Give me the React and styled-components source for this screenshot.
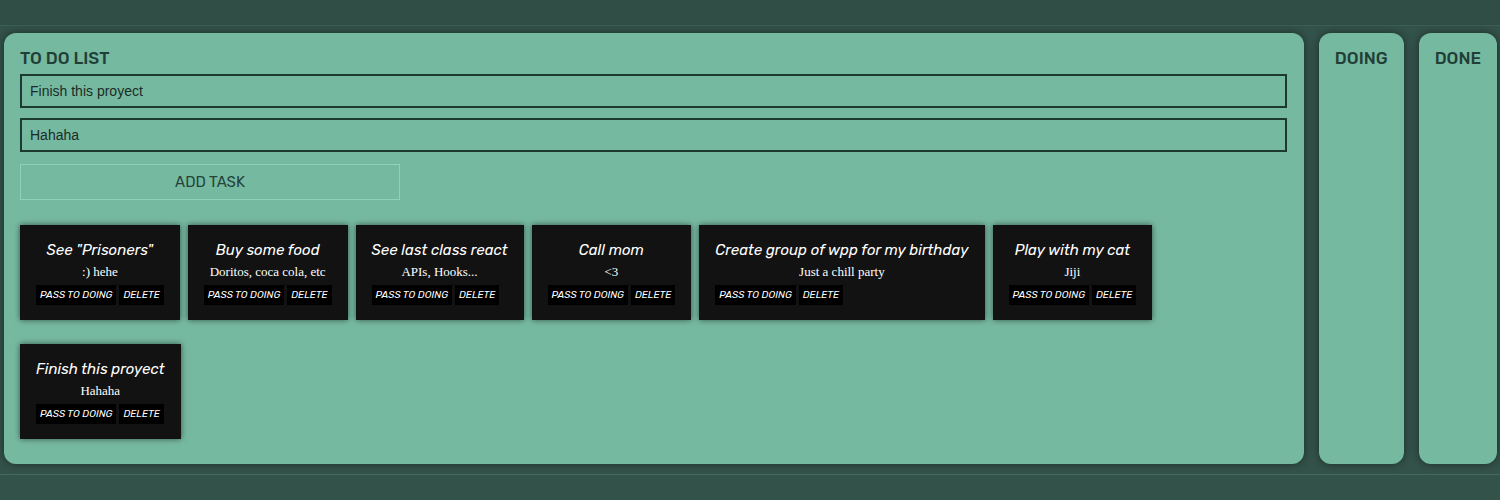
import React from "react";
import styled, { createGlobalStyle } from "styled-components";

const tasks = [
  { title: 'See "Prisoners"', text: ":) hehe" },
  { title: "Buy some food", text: "Doritos, coca cola, etc" },
  { title: "See last class react", text: "APIs, Hooks..." },
  { title: "Call mom", text: "<3" },
  { title: "Create group of wpp for my birthday", text: "Just a chill party" },
  { title: "Play with my cat", text: "Jiji" },
  { title: "Finish this proyect", text: "Hahaha" },
];

function App() {
  return (
    <>
      <GlobalStyle />
      <Page>
        <Header />
        <Board>
          <TodoPanel>
            <Title>TO DO LIST</Title>
            <Input defaultValue="Finish this proyect" />
            <Input defaultValue="Hahaha" />
            <AddButton>ADD TASK</AddButton>
            <CardList>
              {tasks.map((t) => (
                <Card key={t.title}>
                  <CardTitle>{t.title}</CardTitle>
                  <CardText>{t.text}</CardText>
                  <CardActions>
                    <SmallButton>Pass to doing</SmallButton>
                    <SmallButton>Delete</SmallButton>
                  </CardActions>
                </Card>
              ))}
            </CardList>
          </TodoPanel>
          <SidePanel>
            <Title>DOING</Title>
          </SidePanel>
          <SidePanel>
            <Title>DONE</Title>
          </SidePanel>
        </Board>
        <Footer />
      </Page>
    </>
  );
}

export default App;

const GlobalStyle = createGlobalStyle`
  body {
    margin: 0;
    background: #33524a;
    font-family: Rubik, Inter, "Noto Sans", sans-serif;
  }
`;
const Page = styled.div`
  height: 500px;
  display: flex;
  flex-direction: column;
`;
const Header = styled.div`
  height: 25px;
  background: #304e45;
  border-bottom: 1px solid #3b5e54;
`;
const Board = styled.div`
  height: 448px;
  box-sizing: border-box;
  display: flex;
  gap: 15px;
  padding: 7px 3px 10px 4px;
`;
const Footer = styled.div`
  flex: 1;
  border-top: 1px solid #426a5e;
`;
const Panel = styled.div`
  background: #76b9a1;
  border-radius: 12px;
  box-shadow: 0 0 8px rgba(0, 0, 0, 0.45);
  box-sizing: border-box;
`;
const TodoPanel = styled(Panel)`
  flex: 1;
  padding: 14px 17px 14px 16px;
`;
const SidePanel = styled(Panel)`
  padding: 14px 16px;
`;
const Title = styled.h2`
  margin: 0 0 5px;
  font-size: 17px;
  line-height: 22px;
  font-weight: 500;
  color: #213f36;
`;
const Input = styled.input`
  display: block;
  width: 100%;
  height: 34px;
  box-sizing: border-box;
  margin-bottom: 10px;
  padding: 0 8px;
  background: transparent;
  border: 2px solid #1d3a31;
  font-family: "Liberation Sans", Arial, sans-serif;
  font-size: 14px;
  color: #1b2c26;
  outline: none;
`;
const AddButton = styled.button`
  display: block;
  width: 380px;
  height: 36px;
  margin-top: 12px;
  background: transparent;
  border: 1px solid #8ed3b8;
  font-family: Rubik, Inter, sans-serif;
  font-size: 15px;
  font-weight: 400;
  color: #24433a;
`;
const CardList = styled.div`
  display: flex;
  flex-wrap: wrap;
  align-items: flex-start;
  gap: 24px 8px;
  margin-top: 25px;
`;
const Card = styled.div`
  background: #121212;
  padding: 16px 16px 15px;
  box-shadow: 0 0 6px rgba(0, 0, 0, 0.55);
  color: #fff;
  text-align: center;
`;
const CardTitle = styled.div`
  font-size: 15px;
  line-height: 19px;
  font-style: italic;
  white-space: nowrap;
`;
const CardText = styled.div`
  margin-top: 4px;
  font-family: "Liberation Serif", "Times New Roman", serif;
  font-size: 13px;
  line-height: 15px;
`;
const CardActions = styled.div`
  display: flex;
  gap: 3px;
  margin-top: 6px;
`;
const SmallButton = styled.button`
  background: #000;
  border: none;
  color: #fff;
  font-family: Rubik, Inter, sans-serif;
  font-size: 10px;
  font-style: italic;
  font-weight: 400;
  text-transform: uppercase;
  padding: 4px 4px;
  height: 20px;
  line-height: 12px;
`;
